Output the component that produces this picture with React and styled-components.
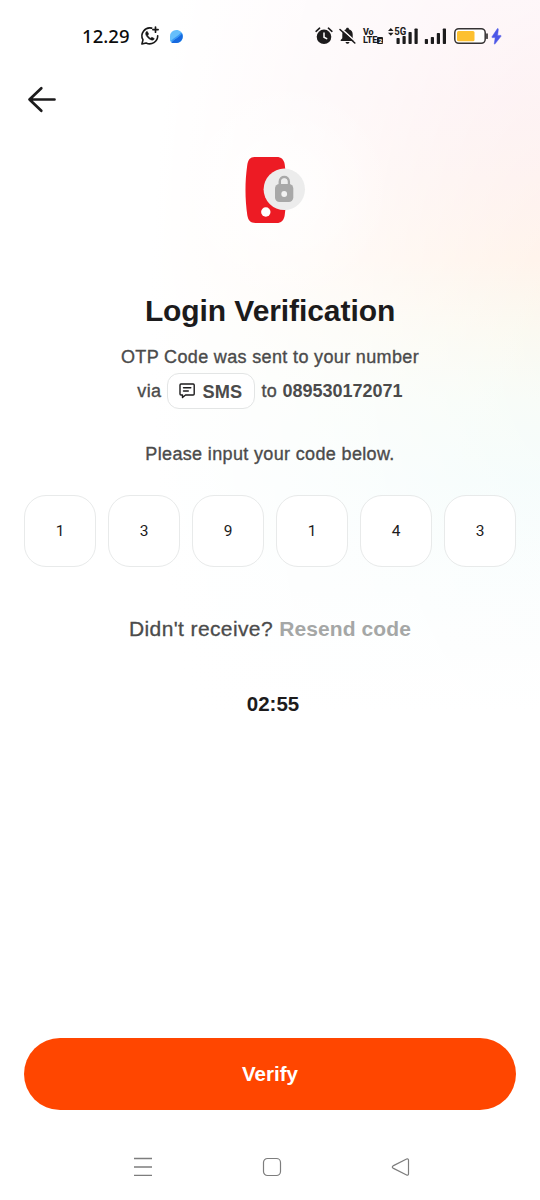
import React from "react";
import styled, { createGlobalStyle } from "styled-components";


const GlobalStyle = createGlobalStyle`
*{
    box-sizing: border-box;
}

body{
    margin: 0;
    background-color: #ffffff;
}
`;
const Screen = styled.div`
display: flex;
flex-direction: column;
width: 540px;
height: 1200px;
overflow: hidden;
font-family: "Liberation Sans", Arial, sans-serif;
color: #4b4b4b;
background:
    radial-gradient(circle 115px at 276px 190px, rgba(255,255,255,0.9) 0%, rgba(255,255,255,0) 100%),
    radial-gradient(ellipse 410px 900px at 560px 330px, rgba(255,255,255,0) 0%, rgba(255,255,255,0.6) 55%, #ffffff 100%),
    linear-gradient(to bottom, #fdf1f5 0px, #fdeef0 100px, #fef0ed 180px, #fff3ea 260px, #fbf9f0 330px, #f7fcf7 400px, #f4fcfb 480px, #f9fdfd 590px, #ffffff 710px);
`;
const StatusBar = styled.div`
display: flex;
justify-content: space-between;
align-items: center;
height: 72px;
padding: 0 38px 0 82px;
color: #1c1b1c;
`;
const StatusGroup = styled.div`
display: flex;
align-items: center;
`;
const Clock = styled.span`
width: 58px;
font-family: "Noto Sans", sans-serif;
font-size: 18.5px;
font-weight: 500;
line-height: 24px;
letter-spacing: 0.05px;
color: #0c0c0c;
`;
const Icon = styled.svg`
display: block;
flex: none;
overflow: visible;
margin-left: ${props => props.$gap || 0}px;
`;
const Volte = styled.div`
width: 20px;
margin-left: 7px;
font-family: Roboto, sans-serif;
font-size: 9px;
font-weight: 800;
letter-spacing: -0.1px;
`;
const VolteRow = styled.div`
display: flex;
align-items: center;
height: 8.5px;
line-height: 8.5px;
`;
const SimBadge = styled.span`
flex: none;
width: 6px;
height: 7px;
border-radius: 1px;
background-color: #1c1b1c;
color: #ffffff;
font-size: 6px;
line-height: 7px;
text-align: center;
`;
const Header = styled.header`
display: flex;
align-items: center;
height: 54px;
padding-left: 27px;
`;
const BackButton = styled.button`
padding: 0;
border: none;
background: none;
color: #1c1b1c;
`;
const Content = styled.main`
display: flex;
flex-direction: column;
align-items: center;
flex: 1;
padding: 30px 24px 0;
`;
const Title = styled.h1`
margin: 69px 0 0;
font-size: 30px;
line-height: 36px;
letter-spacing: -0.08px;
color: #1c1b1c;
`;
const Line = styled.p`
display: flex;
align-items: center;
justify-content: center;
height: 34px;
margin: ${props => props.$top || 0}px 0 0;
font-size: 18px;
letter-spacing: 0.35px;
-webkit-text-stroke: 0.35px currentColor;
white-space: pre;
`;
const Channel = styled.span`
display: flex;
align-items: center;
width: 88px;
height: 36px;
margin: 0 6px;
padding-left: 11px;
border: 1.5px solid #e3e5e5;
border-radius: 12px;
background-color: #ffffff;
`;
const ChannelName = styled.strong`
margin: 2px 0 0 7px;
font-size: 18.2px;
letter-spacing: 0.2px;
-webkit-text-stroke: 0;
`;
const PhoneNumber = styled.strong`
letter-spacing: 0;
-webkit-text-stroke: 0;
`;
const CodeRow = styled.div`
display: grid;
grid-template-columns: repeat(6, 72px);
gap: 12px;
margin-top: 24px;
`;
const CodeCell = styled.div`
display: flex;
align-items: center;
justify-content: center;
height: 72px;
border: 1.5px solid #e8eaea;
border-radius: 22px;
background-color: #ffffff;
font-family: Roboto, sans-serif;
font-size: 15.5px;
color: #1c1b1c;
`;
const Resend = styled.p`
margin: 50px 0 0;
font-size: 21px;
line-height: 24px;
letter-spacing: 0.38px;
-webkit-text-stroke: 0.3px currentColor;
`;
const ResendLink = styled.strong`
letter-spacing: 0.1px;
color: #a5a7a6;
-webkit-text-stroke: 0;
`;
const Timer = styled.div`
margin-top: 51px;
padding-left: 6px;
font-size: 20.5px;
font-weight: 700;
line-height: 24px;
color: #1c1b1c;
`;
const VerifyButton = styled.button`
width: 492px;
height: 72px;
margin-top: auto;
padding: 0;
border: none;
border-radius: 36px;
background-color: #ff4600;
color: #ffffff;
font-family: inherit;
font-size: 20.6px;
font-weight: 700;
`;
const NavBar = styled.nav`
display: flex;
align-items: center;
justify-content: space-between;
height: 90px;
padding: 24px 129px 0 133px;
color: #7d7d7d;
`;


function WhatsAppIcon(){
    return (
        <Icon width="20" height="20" viewBox="0 0 20 20" fill="none" stroke="#171717" strokeWidth="1.6" strokeLinecap="round" strokeLinejoin="round">
            <path d="M11.7 2.1A8 8 0 0 0 3 13.9L1.9 18l4.2-1A8 8 0 0 0 17.7 9.8" />
            <path d="M6.2 5.8c-1.3 1.4-.5 3.8 1.7 6s4.7 3 6 1.7l.4-.9-2.4-1.4-1.2 1c-1.4-.6-2.4-1.6-3-3l1-1.2-1.4-2.5z" fill="#171717" strokeWidth="0.5" />
            <path d="M15.5 1v5.2M12.9 3.6h5.2" strokeWidth="1.7" />
        </Icon>
    )
}

function BrowserIcon(){
    return (
        <Icon $gap={9} width="15" height="15" viewBox="0 0 15 15">
            <path d="M1 7.2A6.2 6.2 0 0 1 7.3 1c3.7 0 6.6 2.6 6.6 6.4 0 3.7-2.8 6.6-6.5 6.6H3.2L1 12z" fill="#66bffb" />
            <path d="M13 4.2c2.2 4.3-.6 9.8-5.6 9.8H3.2c-.6 0-.8-.7-.4-1.1C5 10 9.5 8.5 13 4.2z" fill="#1769df" />
            <path d="M2.5 12.4C5 9 9.6 8 12.6 4" fill="none" stroke="#3798f5" strokeWidth="1.5" />
        </Icon>
    )
}

function AlarmIcon(){
    return (
        <Icon width="18" height="18" viewBox="0 0 18 18" fill="none" stroke="currentColor" strokeLinecap="round">
            <circle cx="9" cy="9.8" r="7.3" fill="currentColor" stroke="none" />
            <path d="M1.1 4.3 4.6 1.2M16.9 4.3 13.4 1.2" strokeWidth="1.6" />
            <path d="M9 6v4.2l2.7 1.4" stroke="#ffffff" strokeWidth="1.5" />
        </Icon>
    )
}

function MutedBellIcon(){
    return (
        <Icon $gap={6} width="17" height="18" viewBox="0 0 17 18">
            <path d="M8.5.8c.9 0 1.4.5 1.4 1.4 2.4.6 3.8 2.5 3.8 5v4l1.6 1.8v1H1.7v-1l1.6-1.8v-4c0-2.5 1.4-4.4 3.8-5 0-.9.5-1.4 1.4-1.4zM6.5 15h4c-.3 1.2-1 1.8-2 1.8s-1.7-.6-2-1.8z" fill="currentColor" />
            <path d="M2 1.4 17 15" stroke="#fffafa" strokeWidth="1.6" />
            <path d="M1 2.5 15.8 16" stroke="currentColor" strokeWidth="1.6" strokeLinecap="round" />
        </Icon>
    )
}

function MobileSignalIcon(){
    return (
        <Icon $gap={5} width="32" height="18" viewBox="0 0 32 18" fill="currentColor">
            <path d="M0 4 2.8 1l2.8 3zM0 5.7l2.8 3 2.8-3z" />
            <text x="6.3" y="8.2" fontSize="11" fontWeight="700" fontFamily="Roboto, sans-serif" textLength="12" lengthAdjust="spacingAndGlyphs">5G</text>
            <rect x="8.5" y="11" width="3.2" height="6" rx="0.7" />
            <rect x="14.5" y="9" width="3.2" height="8" rx="0.7" />
            <rect x="20.5" y="5" width="3.2" height="12" rx="0.7" />
            <rect x="26.5" y="1.5" width="3.2" height="15.5" rx="0.7" />
        </Icon>
    )
}

function SignalIcon(){
    return (
        <Icon $gap={5} width="22" height="18" viewBox="0 0 22 18" fill="currentColor">
            <rect x="-0.2" y="12" width="3.2" height="5" rx="0.7" />
            <rect x="5.8" y="10" width="3.2" height="7" rx="0.7" />
            <rect x="11.8" y="6" width="3.2" height="11" rx="0.7" />
            <rect x="17.8" y="1.5" width="3.2" height="15.5" rx="0.7" />
        </Icon>
    )
}

function BatteryIcon(){
    return (
        <Icon $gap={7} width="34" height="18" viewBox="0 0 34 18" fill="none">
            <rect x="0.8" y="1.7" width="30.4" height="14.6" rx="4" fill="#ffffff" stroke="#353233" strokeWidth="1.5" />
            <rect x="3" y="4" width="17.5" height="10.2" rx="1.5" fill="#fdc02f" />
            <path d="M33 7v4.2" stroke="#353233" strokeWidth="1.7" strokeLinecap="round" />
        </Icon>
    )
}

function ChargingIcon(){
    return (
        <Icon $gap={3} width="11" height="17" viewBox="0 0 11 17">
            <path d="M6.3.8 1 8.7c-.3.5 0 .9.5.9h2.7l-.9 6c0 .7.4.8.8.2L10 8.3c.3-.5.1-.9-.5-.9H6.6l.7-6c.1-.8-.5-1.2-1-.6z" fill="#4c57e7" stroke="#4c57e7" strokeWidth="0.5" />
        </Icon>
    )
}

function LockedPhoneLogo(){
    return (
        <Icon $gap={12} width="62" height="68" viewBox="0 0 62 68">
            <path d="M9.5 1h22.2c4.5 0 7.3 2.6 8 7.2 2.2 17 2.2 34 0 51-.7 5-3.5 7.8-8 7.8H10.5c-5 0-7.3-2.5-8.2-7.7C0 43.5-.2 26.5 2.2 9.5 3 3.7 5.2 1 9.5 1z" fill="#ed1b24" />
            <circle cx="20.8" cy="56" r="4.7" fill="#ffffff" />
            <circle cx="39.3" cy="33.3" r="20.7" fill="#ececec" />
            <path d="M34.8 29.5v-3.8c0-6.200 9-6.200 9 0v3.8" fill="none" stroke="#a8a8a8" strokeWidth="2.5" />
            <rect x="30" y="28" width="18.300" height="18" rx="4.5" fill="#a8a8a8" />
            <path d="M36.1 28v-2.300c0-4.300 6.400-4.300 6.400 0V28z" fill="#ececec" />
            <circle cx="39.2" cy="38" r="2.9" fill="#f2f2f2" />
        </Icon>
    )
}

function MessageIcon(){
    return (
        <Icon width="16" height="16" viewBox="0 0 16 16" fill="none" stroke="#1c1b1c" strokeWidth="1.4" strokeLinejoin="round" strokeLinecap="round">
            <path d="M2 1h12.2c.6 0 1 .4 1 1v9c0 .6-.4 1-1 1H6.5L3.5 14.5V12H2c-.6 0-1-.4-1-1V2c0-.6.4-1 1-1z" />
            <path d="M4.5 4.7h7.3M4.5 8h4.8" />
        </Icon>
    )
}


const code = ["1", "3", "9", "1", "4", "3"];

export default function App(){
    return (
        <Screen>
            <GlobalStyle />
            <StatusBar>
                <StatusGroup>
                    <Clock>12.29</Clock>
                    <WhatsAppIcon />
                    <BrowserIcon />
                </StatusGroup>
                <StatusGroup>
                    <AlarmIcon />
                    <MutedBellIcon />
                    <Volte>
                        <VolteRow>Vo</VolteRow>
                        <VolteRow>LTE<SimBadge>2</SimBadge></VolteRow>
                    </Volte>
                    <MobileSignalIcon />
                    <SignalIcon />
                    <BatteryIcon />
                    <ChargingIcon />
                </StatusGroup>
            </StatusBar>
            <Header>
                <BackButton aria-label="Back">
                    <Icon width="30" height="27" viewBox="0 0 30 27" fill="none" stroke="currentColor" strokeWidth="2.7" strokeLinecap="round" strokeLinejoin="round">
                        <path d="M14.3 2.2 2.5 13.5l11.8 11.3M2.5 13.5h25" />
                    </Icon>
                </BackButton>
            </Header>
            <Content>
                <LockedPhoneLogo />
                <Title>Login Verification</Title>
                <Line $top={11}>OTP Code was sent to your number</Line>
                <Line>
                    via
                    <Channel>
                        <MessageIcon />
                        <ChannelName>SMS</ChannelName>
                    </Channel>
                    {"to "}<PhoneNumber>089530172071</PhoneNumber>
                </Line>
                <Line $top={29}>Please input your code below.</Line>
                <CodeRow>
                    {code.map((digit, index) => (
                        <CodeCell key={index}>{digit}</CodeCell>
                    ))}
                </CodeRow>
                <Resend>Didn't receive? <ResendLink>Resend code</ResendLink></Resend>
                <Timer>02:55</Timer>
                <VerifyButton>Verify</VerifyButton>
            </Content>
            <NavBar>
                <Icon width="20" height="20" viewBox="0 0 20 20" fill="none" stroke="currentColor" strokeWidth="1.3">
                    <path d="M1 1.5h18M1 10h18M1 18.3h18" />
                </Icon>
                <Icon width="20" height="20" viewBox="0 0 20 20" fill="none" stroke="currentColor" strokeWidth="1.2">
                    <rect x="1.5" y="1.5" width="17" height="17" rx="4" />
                </Icon>
                <Icon width="20" height="20" viewBox="0 0 20 20" fill="none" stroke="currentColor" strokeWidth="1.2" strokeLinejoin="round">
                    <path d="M2 8.9 15.6 2c1-.5 1.9 0 1.9 1v14c0 1-.9 1.6-1.9 1L2 11.1c-.9-.5-.9-1.7 0-2.200z" />
                </Icon>
            </NavBar>
        </Screen>
    )
}
